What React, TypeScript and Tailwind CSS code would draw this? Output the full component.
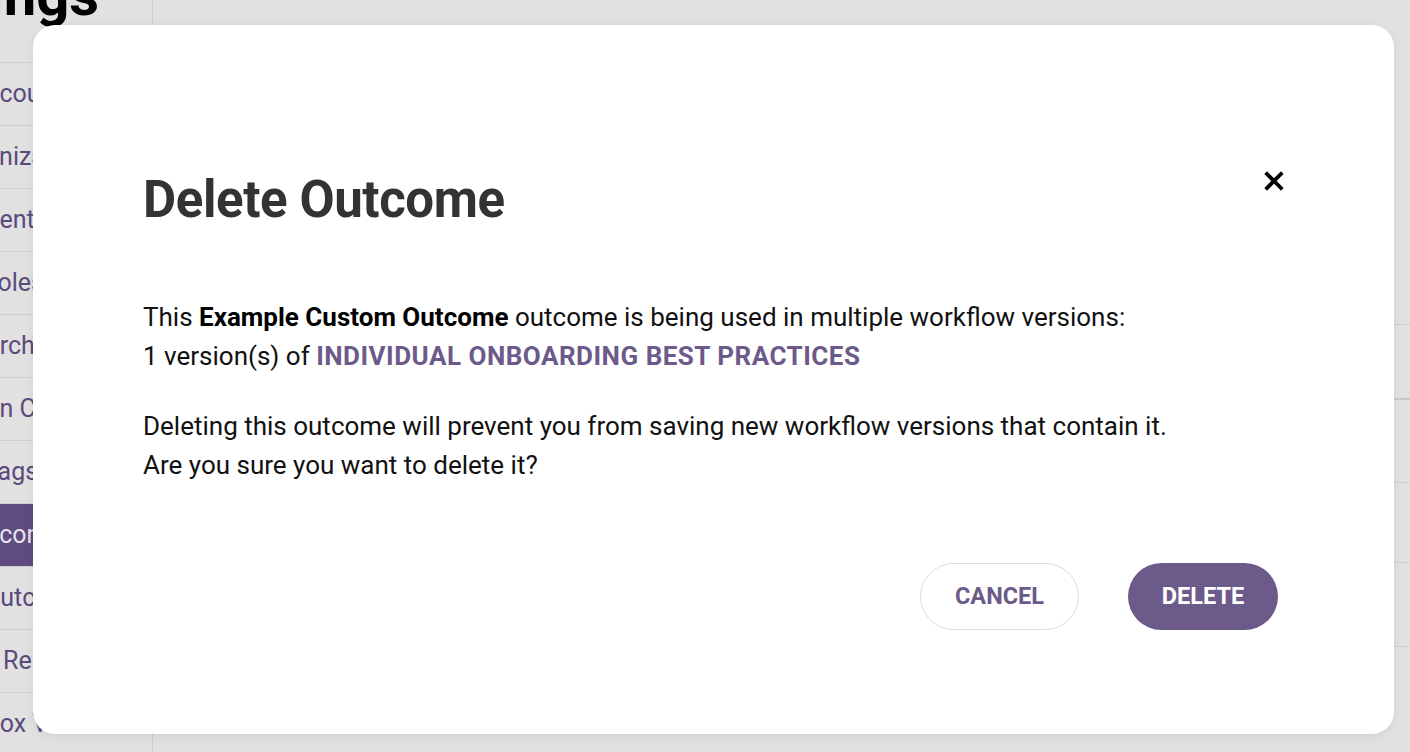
import React from 'react';

const sideItems = [
  { label: 'Account', cls: 'ml-[-30px]' },
  { label: 'Organization', cls: 'ml-[-54px]' },
  { label: 'Content', cls: 'ml-[-53px]' },
  { label: 'Roles', cls: 'ml-[-18px]' },
  { label: 'Search', cls: 'ml-[-42px]' },
  { label: 'Admin Config', cls: 'ml-[-59px]' },
  { label: 'Tags', cls: 'ml-[-16px]' },
  { label: 'Outcomes', cls: 'ml-[-40px]', active: true },
  { label: 'Outcome Sets', cls: 'ml-[-17px]' },
  { label: 'Reports', cls: 'ml-[3px]' },
  { label: 'Inbox Views', cls: 'ml-[-35px]' },
];

function CloseIcon() {
  return (
    <svg width="20" height="20" viewBox="0 0 20 20">
      <path d="M3 3 L17 17 M17 3 L3 17" stroke="#000" strokeWidth="3.8" strokeLinecap="square" />
    </svg>
  );
}

export default function App() {
  return (
    <div className="relative w-[1410px] h-[752px] overflow-hidden bg-[#e1e1e1] font-['Roboto',sans-serif]">
      {/* Page behind the overlay */}
      <div className="flex h-full">
        <div className="w-[152px] shrink-0 flex flex-col overflow-hidden">
          <div className="h-[63px] shrink-0 border-b border-[#cfcfcf] overflow-hidden">
            <div className="ml-[-118px] mt-[-34px] text-[58px] leading-none font-bold text-black whitespace-nowrap">
              Settings
            </div>
          </div>
          {sideItems.map((item) => (
            <div
              key={item.label}
              className={`h-[63px] shrink-0 flex items-center border-b border-[#cfcfcf] overflow-hidden ${item.active ? 'bg-[#5e4c7e] text-[#e6e3ec]' : 'text-[#5b4a7c]'}`}
            >
              <span className={`text-[25px] whitespace-nowrap ${item.cls}`}>{item.label}</span>
            </div>
          ))}
        </div>
        <div className="flex-1 flex flex-col border-l border-[#cdcdcd]">
          <div className="h-[325px] border-b border-[#cfcfcf]"></div>
          <div className="h-[75px] border-b-2 border-[#c6c8cc]"></div>
          <div className="h-[83px] border-b border-[#cfcfcf]"></div>
          <div className="h-[80px] border-b border-[#cfcfcf]"></div>
          <div className="h-[84px] border-b border-[#cfcfcf]"></div>
        </div>
      </div>

      {/* Modal */}
      <div className="absolute left-[33px] top-[25px] w-[1361px] h-[709px] bg-white rounded-[22px] shadow-[0_2px_10px_rgba(0,0,0,0.08)] pl-[110px] pr-[110px] pt-[149px]">
        <div className="flex justify-between items-start">
          <h1 className="text-[51px] leading-none font-bold text-[#333333] tracking-[-0.4px]">Delete Outcome</h1>
          <button className="mt-[-3px]">
            <CloseIcon />
          </button>
        </div>

        <div className="mt-[73px] text-[26px] leading-[39px] text-[#111111]">
          <p>
            This <span className="font-bold text-black">Example Custom Outcome</span> outcome is being used in multiple workflow versions:
          </p>
          <p>
            1 version(s) of <span className="font-bold text-[#6c5a8a] tracking-[0.5px]">INDIVIDUAL ONBOARDING BEST PRACTICES</span>
          </p>
        </div>

        <div className="mt-[31px] text-[26px] leading-[39px] text-[#111111]">
          <p>Deleting this outcome will prevent you from saving new workflow versions that contain it.</p>
          <p>Are you sure you want to delete it?</p>
        </div>

        <div className="mt-[78px] flex justify-end gap-[49px] pr-[6px]">
          <button className="w-[159px] h-[67px] rounded-full border-[1.5px] border-[#dcdcdc] bg-white text-[23.5px] font-bold text-[#6c5a8a]">
            CANCEL
          </button>
          <button className="w-[150px] h-[67px] rounded-full bg-[#6c5a8a] text-[23.5px] font-bold text-white">
            DELETE
          </button>
        </div>
      </div>
    </div>
  );
}
